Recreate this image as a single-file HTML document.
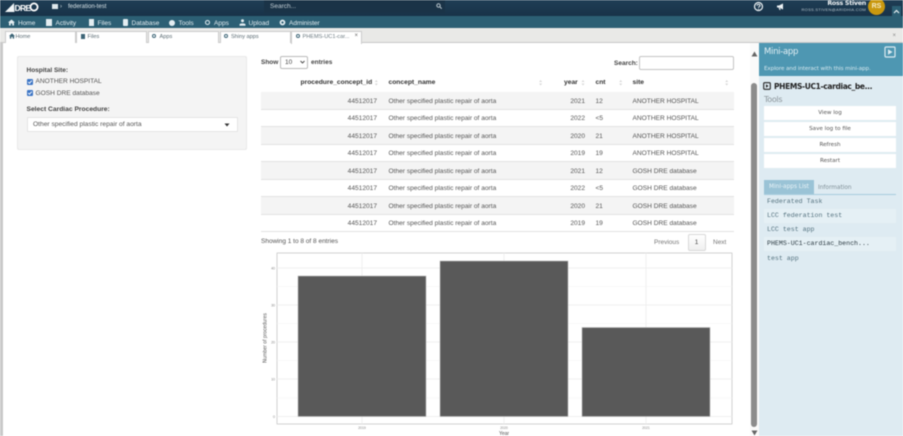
<!DOCTYPE html>
<html><head><meta charset="utf-8">
<style>
html,body{margin:0;padding:0;width:903px;height:436px;overflow:hidden;background:#fff}
#r{position:relative;width:903px;height:436px;overflow:hidden;font-family:"Liberation Sans",sans-serif;filter:blur(.45px);background:#fff}
#r div,#r svg{position:absolute}
.t{white-space:nowrap;line-height:10px}
.nav{color:#e4eef2;font-size:6.5px;top:18.500px;height:10px;line-height:10px;white-space:nowrap}
.tab{top:30.500px;height:11px;background:#fff;border:1px solid #ccc;border-bottom:none;width:69px;box-sizing:content-box}
.tl{top:31.500px;font-size:5.600px;color:#5a6a72}
.row{left:261px;width:473px;height:17.500px;border-bottom:1px solid #e2e2e2;box-sizing:border-box}
.odd{background:#f4f4f4}
.c{font-size:6.600px;color:#555;line-height:10px;white-space:nowrap}
.h{font-size:6.700px;color:#333;font-weight:bold;line-height:10px;white-space:nowrap;top:78px}
.btn{left:764px;width:132px;height:14.500px;background:#fff;font-size:5.600px;color:#555;text-align:center;line-height:14.500px;font-family:"DejaVu Sans",sans-serif}
.ml{left:764px;width:132px;height:14px;line-height:14px;font-family:"Liberation Mono",monospace;font-size:6.600px;color:#54727f;padding-left:3px;box-sizing:border-box;white-space:nowrap}
</style></head><body><div id="r">

<div style="left:0;top:0;width:903px;height:16px;background:linear-gradient(#1f3e55,#183248)"></div>
<div style="left:0;top:16px;width:903px;height:12px;background:#2c5f74"></div>
<div style="left:0;top:28px;width:903px;height:14px;background:#e9e9e7;border-bottom:1px solid #c8c8c8;box-sizing:content-box"></div>
<div style="left:0;top:42px;width:3px;height:394px;background:#c9c9c9"></div>

<svg style="left:5px;top:2px" width="10" height="11" viewBox="0 0 10 11"><path d="M0 10 L9 1 L9.500 10 Z" fill="#f2f6f8"/></svg>
<div class="t" style="left:14.500px;top:2.500px;color:#fff;font-weight:bold;font-size:8.500px;letter-spacing:-.7px;line-height:11px">DRE</div>
<svg style="left:29px;top:2px" width="10" height="10" viewBox="0 0 10 10"><circle cx="5" cy="5" r="3.600" fill="none" stroke="#fff" stroke-width="1.800"/></svg>
<div style="left:52px;top:4px;width:6px;height:5px;background:#dfe8ec"></div>
<div class="t" style="left:60px;top:2px;color:#cfdde3;font-size:6px">›</div>
<div class="t" style="left:68px;top:2px;color:#d5e1e6;font-size:6px">federation-test</div>
<div style="left:264px;top:0;width:181px;height:13px;background:#1a3347"></div>
<div class="t" style="left:270px;top:1.500px;color:#c3ced5;font-size:6.500px">Search...</div>
<svg style="left:435.500px;top:3px" width="6" height="6" viewBox="0 0 6 6"><circle cx="2.500" cy="2.500" r="1.700" fill="none" stroke="#b8c5cc"/><path d="M4 4L5.700 5.700" stroke="#b8c5cc"/></svg>

<svg style="left:753px;top:1px" width="11" height="11" viewBox="0 0 11 11"><circle cx="5.500" cy="5.500" r="4" fill="none" stroke="#eef3f5" stroke-width="1.200"/><path d="M4 4.600C4 3 7 3 7 4.600C7 5.600 5.500 5.600 5.500 6.800M5.500 7.600V8.400" fill="none" stroke="#eef3f5"/></svg>
<svg style="left:776px;top:2px" width="9" height="9" viewBox="0 0 9 9"><path d="M1 3.500H3L7 1.500V7.500L3 5.500H1ZM2.500 5.500L3.500 8H4.500L4 5.500Z" fill="#eef3f5"/></svg>
<div class="t" style="right:37px;top:-1px;color:#f1f4f6;font-size:6.300px;font-weight:bold;font-family:'DejaVu Sans',sans-serif;letter-spacing:-.25px">Ross Stiven</div>
<div class="t" style="right:37px;top:5px;color:#b6c4cc;font-size:4px;letter-spacing:.3px">ROSS.STIVEN@ARIDHIA.COM</div>
<div style="left:868px;top:-2px;width:17px;height:17px;border-radius:50%;background:#c9980f;color:#f6ecc8;font-size:7px;font-weight:bold;text-align:center;line-height:17px">RS</div>
<div style="left:892px;top:6px;width:9px;height:10px;background:#2c5f74"></div>
<svg style="left:893px;top:9px" width="7" height="5" viewBox="0 0 7 5"><path d="M1 4L3.500 1.500L6 4" fill="none" stroke="#e8f0f3" stroke-width="1.200"/></svg>

<svg style="left:8px;top:19px" width="7" height="7" viewBox="0 0 7 7"><path d="M3.500 .5L7 3.500H6V6.500H4.300V4.500H2.700V6.500H1V3.500H0Z" fill="#e4eef2"/></svg>
<div class="nav" style="left:18px">Home</div>
<div style="left:46px;top:19px;width:6px;height:6.500px;background:#e4eef2"></div>
<div class="nav" style="left:55.500px">Activity</div>
<div style="left:89px;top:19px;width:4.500px;height:6.500px;background:#e4eef2"></div>
<div class="nav" style="left:97.500px">Files</div>
<div style="left:123px;top:19px;width:5px;height:6.500px;background:#e4eef2;border-radius:1px"></div>
<div class="nav" style="left:131.500px">Database</div>
<div style="left:169px;top:19.500px;width:6px;height:6px;background:#e4eef2;border-radius:50%"></div>
<div class="nav" style="left:178.500px">Tools</div>
<div style="left:204.500px;top:19.500px;width:3px;height:3px;border:1.500px solid #e4eef2;border-radius:50%"></div>
<div class="nav" style="left:214px">Apps</div>
<svg style="left:239px;top:19px" width="7" height="7" viewBox="0 0 7 7"><circle cx="3.500" cy="1.800" r="1.500" fill="#e4eef2"/><path d="M.5 6.800V5.500C.5 4 6.500 4 6.500 5.500V6.800Z" fill="#e4eef2"/></svg>
<div class="nav" style="left:248.500px">Upload</div>
<svg style="left:279px;top:19px" width="7" height="7" viewBox="0 0 7 7"><circle cx="3.500" cy="3.500" r="2" fill="none" stroke="#e4eef2" stroke-width="1.700"/></svg>
<div class="nav" style="left:289px">Administer</div>

<div class="tab" style="left:4.500px"></div>
<svg style="left:8.500px;top:33px" width="6" height="6" viewBox="0 0 7 7"><path d="M3.500 .5L7 3.500H6V6.500H4.300V4.500H2.700V6.500H1V3.500H0Z" fill="#3d6577"/></svg>
<div class="t tl" style="left:15.500px">Home</div>
<div class="tab" style="left:76px"></div>
<div style="left:81px;top:33.500px;width:3.500px;height:5px;background:#3d6577"></div>
<div class="t tl" style="left:87.500px">Files</div>
<div class="tab" style="left:147.500px"></div>
<div style="left:152px;top:33.500px;width:2px;height:2px;border:1.500px solid #3d6577;border-radius:50%"></div>
<div class="t tl" style="left:159.500px">Apps</div>
<div class="tab" style="left:219.500px"></div>
<div style="left:224px;top:33.500px;width:2px;height:2px;border:1.500px solid #3d6577;border-radius:50%"></div>
<div class="t tl" style="left:231px">Shiny apps</div>
<div class="tab" style="left:291px;height:12.500px"></div>
<div style="left:295.500px;top:33.500px;width:2px;height:2px;border:1.500px solid #3d6577;border-radius:50%"></div>
<div class="t tl" style="left:302.500px;color:#6c7a81">PHEMS-UC1-car...</div>
<div class="t" style="left:354.500px;top:31px;font-size:6px;color:#666">×</div>
<div class="t" style="left:892.500px;top:31px;font-size:6px;color:#888">×</div>

<div style="left:17px;top:55.500px;width:229.500px;height:94px;background:#f4f4f4;border:1px solid #e8e8e8;border-radius:2px;box-sizing:border-box"></div>
<div class="t" style="left:26.500px;top:65.500px;font-size:6.500px;font-weight:bold;color:#444">Hospital Site:</div>
<div style="left:26.500px;top:78.500px;width:6px;height:6px;background:#3b74c4;border-radius:1px"></div>
<svg style="left:26.500px;top:78.500px" width="6" height="6" viewBox="0 0 6 6"><path d="M1.200 3L2.500 4.300L4.800 1.600" fill="none" stroke="#fff"/></svg>
<div class="t" style="left:35.500px;top:77px;font-size:6.600px;color:#555">ANOTHER HOSPITAL</div>
<div style="left:26.500px;top:90px;width:6px;height:6px;background:#3b74c4;border-radius:1px"></div>
<svg style="left:26.500px;top:90px" width="6" height="6" viewBox="0 0 6 6"><path d="M1.200 3L2.500 4.300L4.800 1.600" fill="none" stroke="#fff"/></svg>
<div class="t" style="left:35.500px;top:88.500px;font-size:6.600px;color:#555">GOSH DRE database</div>
<div class="t" style="left:26.500px;top:105px;font-size:6.700px;font-weight:bold;color:#444">Select Cardiac Procedure:</div>
<div style="left:26.500px;top:117px;width:211px;height:15px;background:#fff;border:1px solid #e4e4e4;box-sizing:border-box;border-radius:1px"></div>
<div class="t" style="left:33px;top:120px;font-size:6.650px;color:#555">Other specified plastic repair of aorta</div>
<svg style="left:223.500px;top:122.500px" width="6" height="4" viewBox="0 0 6 4"><path d="M.5 .5H5.500L3 3.500Z" fill="#333"/></svg>

<div class="t" style="left:261px;top:58px;font-size:6.500px;font-weight:bold;color:#444">Show</div>
<div style="left:280px;top:56px;width:28px;height:13px;border:1px solid #bbb;border-radius:2px;box-sizing:border-box;background:#fff"></div>
<div class="t" style="left:285px;top:58px;font-size:6.500px;color:#444">10</div>
<svg style="left:300px;top:60px" width="5" height="4" viewBox="0 0 5 4"><path d="M.5 1L2.500 3L4.500 1" fill="none" stroke="#444" stroke-width=".9"/></svg>
<div class="t" style="left:311px;top:58px;font-size:6.500px;font-weight:bold;color:#444">entries</div>
<div class="t" style="left:614px;top:58.500px;font-size:6.500px;font-weight:bold;color:#444">Search:</div>
<div style="left:639px;top:56px;width:95px;height:14px;border:1px solid #c4c4c4;border-radius:2px;box-sizing:border-box;background:#fff"></div>

<div class="h" style="left:300.500px">procedure_concept_id</div>
<div class="h" style="left:388.500px">concept_name</div>
<div class="h" style="left:564px">year</div>
<div class="h" style="left:595.500px">cnt</div>
<div class="h" style="left:632.500px">site</div>
<svg style="left:255px;top:78px" width="480" height="10" viewBox="255 78 480 10"><g fill="#d8d8d8"><path d="M374.800 82L376.300 80L377.800 82ZM374.800 83.500L376.300 85.500L377.800 83.500Z"/><path d="M539.100 82L540.600 80L542.100 82ZM539.100 83.500L540.600 85.500L542.100 83.500Z"/><path d="M581.500 82L583 80L584.500 82ZM581.500 83.500L583 85.500L584.500 83.500Z"/><path d="M619.200 82L620.700 80L622.200 82ZM619.200 83.500L620.700 85.500L622.200 83.500Z"/><path d="M725.200 82L726.700 80L728.200 82ZM725.200 83.500L726.700 85.500L728.200 83.500Z"/></g></svg>

<div style="left:261px;top:91.500px;width:473px;height:1px;background:#dcdcdc"></div>

<div class="row odd" style="top:92px"></div>
<div class="c" style="right:526px;top:96.500px">44512017</div><div class="c" style="left:388.500px;top:96.500px">Other specified plastic repair of aorta</div><div class="c" style="right:318px;top:96.500px">2021</div><div class="c" style="left:595.500px;top:96.500px">12</div><div class="c" style="left:632.500px;top:96.500px">ANOTHER HOSPITAL</div>
<div class="row" style="top:109.500px"></div>
<div class="c" style="right:526px;top:114px">44512017</div><div class="c" style="left:388.500px;top:114px">Other specified plastic repair of aorta</div><div class="c" style="right:318px;top:114px">2022</div><div class="c" style="left:595.500px;top:114px">&lt;5</div><div class="c" style="left:632.500px;top:114px">ANOTHER HOSPITAL</div>
<div class="row odd" style="top:127px"></div>
<div class="c" style="right:526px;top:131.500px">44512017</div><div class="c" style="left:388.500px;top:131.500px">Other specified plastic repair of aorta</div><div class="c" style="right:318px;top:131.500px">2020</div><div class="c" style="left:595.500px;top:131.500px">21</div><div class="c" style="left:632.500px;top:131.500px">ANOTHER HOSPITAL</div>
<div class="row" style="top:144.500px"></div>
<div class="c" style="right:526px;top:149px">44512017</div><div class="c" style="left:388.500px;top:149px">Other specified plastic repair of aorta</div><div class="c" style="right:318px;top:149px">2019</div><div class="c" style="left:595.500px;top:149px">19</div><div class="c" style="left:632.500px;top:149px">ANOTHER HOSPITAL</div>
<div class="row odd" style="top:162px"></div>
<div class="c" style="right:526px;top:166.500px">44512017</div><div class="c" style="left:388.500px;top:166.500px">Other specified plastic repair of aorta</div><div class="c" style="right:318px;top:166.500px">2021</div><div class="c" style="left:595.500px;top:166.500px">12</div><div class="c" style="left:632.500px;top:166.500px">GOSH DRE database</div>
<div class="row" style="top:179.500px"></div>
<div class="c" style="right:526px;top:184px">44512017</div><div class="c" style="left:388.500px;top:184px">Other specified plastic repair of aorta</div><div class="c" style="right:318px;top:184px">2022</div><div class="c" style="left:595.500px;top:184px">&lt;5</div><div class="c" style="left:632.500px;top:184px">GOSH DRE database</div>
<div class="row odd" style="top:197px"></div>
<div class="c" style="right:526px;top:201.500px">44512017</div><div class="c" style="left:388.500px;top:201.500px">Other specified plastic repair of aorta</div><div class="c" style="right:318px;top:201.500px">2020</div><div class="c" style="left:595.500px;top:201.500px">21</div><div class="c" style="left:632.500px;top:201.500px">GOSH DRE database</div>
<div class="row" style="top:214.500px"></div>
<div class="c" style="right:526px;top:219px">44512017</div><div class="c" style="left:388.500px;top:219px">Other specified plastic repair of aorta</div><div class="c" style="right:318px;top:219px">2019</div><div class="c" style="left:595.500px;top:219px">19</div><div class="c" style="left:632.500px;top:219px">GOSH DRE database</div>

<div class="t" style="left:261px;top:237px;font-size:6.500px;color:#555">Showing 1 to 8 of 8 entries</div>
<div class="t" style="left:654px;top:238px;font-size:6.500px;color:#777">Previous</div>
<div style="left:687.500px;top:233.500px;width:18px;height:17px;border:1px solid #d8d8d8;border-radius:2px;box-sizing:border-box;background:linear-gradient(#fff,#f0f0f0);font-size:6.500px;color:#444;text-align:center;line-height:15px">1</div>
<div class="t" style="left:713px;top:238px;font-size:6.500px;color:#777">Next</div>

<svg style="left:255px;top:250px" width="485" height="186" viewBox="255 250 485 186">
<rect x="277" y="253" width="455" height="171" fill="#fff" stroke="#c9c9c9" stroke-width=".8"/>
<g stroke="#f3f3f3" stroke-width=".6"><path d="M277 398H732M277 360.500H732M277 323.500H732M277 286.500H732"/></g>
<g stroke="#ececec" stroke-width=".8"><path d="M277 416.500H732M277 379H732M277 342H732M277 305H732M277 268H732M362 253V424M504 253V424M646 253V424"/></g>
<g fill="#595959" stroke="#bdbdbd" stroke-width=".6"><rect x="298" y="276" width="128" height="140.500"/><rect x="440" y="261" width="128" height="155.500"/><rect x="582" y="327.500" width="128" height="89"/></g>
<g fill="#888" font-family="Liberation Sans" font-size="3.500" text-anchor="end"><text x="275" y="418">0</text><text x="275" y="380.500">10</text><text x="275" y="343.500">20</text><text x="275" y="306.500">30</text><text x="275" y="269.500">40</text></g>
<g fill="#888" font-family="Liberation Sans" font-size="3.500" text-anchor="middle"><text x="362" y="429">2019</text><text x="504" y="429">2020</text><text x="646" y="429">2021</text></g>
<text x="504" y="435" fill="#555" font-family="Liberation Sans" font-size="5" text-anchor="middle">Year</text>
<text transform="translate(266.500 338) rotate(-90)" fill="#555" font-family="Liberation Sans" font-size="5" text-anchor="middle">Number of procedures</text>
</svg>

<div style="left:750px;top:43px;width:9px;height:393px;background:#fafafa"></div>
<svg style="left:751px;top:51px" width="7" height="6" viewBox="0 0 7 6"><path d="M.5 5.500L3.500 .5L6.500 5.500Z" fill="#666"/></svg>
<div style="left:751px;top:83px;width:6px;height:344px;background:#8c8c8c;border-radius:3px"></div>
<svg style="left:751px;top:430px" width="7" height="6" viewBox="0 0 7 6"><path d="M.5 .5L3.500 5.500L6.500 .5Z" fill="#666"/></svg>

<div style="left:759px;top:43px;width:144px;height:393px;background:#deebf2"></div>
<div style="left:759px;top:43px;width:144px;height:33px;background:#4e97b2"></div>
<div class="t" style="left:764px;top:46.500px;font-size:8.500px;line-height:11px;color:#e2eff4;font-family:'DejaVu Sans',sans-serif;letter-spacing:-.3px">Mini-app</div>
<svg style="left:884px;top:46px" width="12" height="12" viewBox="0 0 12 12"><rect x="1" y="1" width="10" height="10" rx="1" fill="none" stroke="#dbeaf0" stroke-width="1.200"/><path d="M4 3.200L8.500 6L4 8.800Z" fill="#dbeaf0"/></svg>
<div class="t" style="left:764px;top:63.500px;font-size:5.600px;color:#d8e9ef;font-family:'DejaVu Sans',sans-serif;letter-spacing:-.1px">Explore and interact with this mini-app.</div>
<svg style="left:763px;top:81.500px" width="8" height="8" viewBox="0 0 8 8"><rect x=".7" y=".7" width="6.600" height="6.600" rx="1" fill="none" stroke="#222" stroke-width="1.100"/><path d="M3 2.300L5.500 4L3 5.700Z" fill="#222"/></svg>
<div class="t" style="left:774px;top:81.500px;font-size:7.500px;font-weight:bold;color:#222;font-family:'DejaVu Sans',sans-serif;letter-spacing:-.35px">PHEMS-UC1-cardiac_be...</div>
<div class="t" style="left:764px;top:95px;font-size:8px;color:#8b9499;font-family:'DejaVu Sans',sans-serif;letter-spacing:-.3px">Tools</div>
<div class="btn" style="top:105.500px">View log</div>
<div class="btn" style="top:121.500px">Save log to file</div>
<div class="btn" style="top:137.500px">Refresh</div>
<div class="btn" style="top:153.500px">Restart</div>
<div style="left:764px;top:180px;width:50px;height:14px;background:#9ac3d6;color:#e9f3f7;font-size:5.800px;line-height:15px;text-align:center;font-family:'DejaVu Sans',sans-serif">Mini-apps List</div>
<div class="t" style="left:818px;top:182.500px;font-size:5.800px;color:#7f8f97;font-family:'DejaVu Sans',sans-serif">Information</div>
<div style="left:764px;top:194px;width:132px;height:1px;background:#a8cddd"></div>
<div class="ml" style="top:194.500px">Federated Task</div>
<div class="ml" style="top:208.500px;background:#e5f0f5">LCC federation test</div>
<div class="ml" style="top:223px">LCC test app</div>
<div class="ml" style="top:237px;background:#e5f0f5;color:#2b3a42">PHEMS-UC1-cardiac_bench...</div>
<div class="ml" style="top:251.500px">test app</div>

</div></body></html>
